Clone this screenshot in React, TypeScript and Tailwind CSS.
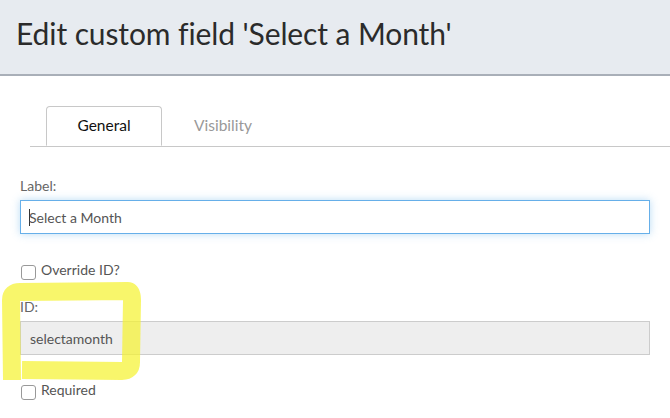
import React from 'react';

const App: React.FC = () => {
  return (
    <div className="relative w-[670px] h-[418px] overflow-hidden bg-white font-['Lato',sans-serif] text-[#333]">
      {/* Header */}
      <div className="h-[76px] bg-[#e7ebf0] border-b-2 border-[#a9afb8] pl-4 pt-[13px]">
        <h1 className="text-[30px] leading-[40px] text-[#2b2b2b] tracking-[-0.1px]">Edit custom field 'Select a Month'</h1>
      </div>

      {/* Tabs */}
      <div className="pl-[30px] pt-[30px]">
        <div className="flex border-b border-[#c8c8c8] pl-4">
          <div className="w-[116px] h-[40px] -mb-px bg-white border border-[#c8c8c8] border-b-white rounded-t-[4px] flex items-center justify-center text-[15.5px] text-[#111]">
            General
          </div>
          <div className="w-[122px] h-[40px] flex items-center justify-center text-[15.5px] text-[#999]">
            Visibility
          </div>
        </div>
      </div>

      {/* Form */}
      <div className="px-5 pt-[30px] text-[14px]">
        <label className="block text-[#666] leading-[18px]">Label:</label>
        <div className="mt-[5px] h-[34px] w-[630px] border border-[#66afe9] shadow-[0_0_8px_rgba(102,175,233,0.45)] flex items-center pl-2 text-[#555]">
          <span className="w-px h-[17px] bg-[#333] -mr-[1px]"></span>
          Select a Month
        </div>

        <div className="mt-[31px] flex items-center gap-[5px] pl-px">
          <span className="w-[15px] h-[15px] rounded-[3px] border border-[#999] bg-white"></span>
          <span className="text-[#555] leading-[18px] -mt-[6px]">Override ID?</span>
        </div>

        <label className="block mt-[18px] text-[#666] leading-[18px]">ID:</label>
        <div className="mt-[5px] h-[34px] w-[630px] border border-[#ccc] bg-[#eeeeee] flex items-center pl-[9px] text-[#555]">
          selectamonth
        </div>

        <div className="mt-[30px] flex items-center gap-[5px] pl-px">
          <span className="w-[15px] h-[15px] rounded-[3px] border border-[#999] bg-white"></span>
          <span className="text-[#555] leading-[18px] -mt-[6px]">Required</span>
        </div>
      </div>

      {/* Highlighter annotation */}
      <svg className="absolute left-0 top-0 pointer-events-none" width="670" height="418">
        <path
          d="M12 380 L11 300 Q11 292 20 292 L128 291 Q132 292 132 300 L131 362 Q131 371 122 371 L22 370"
          fill="none"
          stroke="rgba(245,242,50,0.72)"
          strokeWidth="18"
          strokeLinejoin="round"
          strokeLinecap="butt"
        />
      </svg>
    </div>
  );
};

export default App;
